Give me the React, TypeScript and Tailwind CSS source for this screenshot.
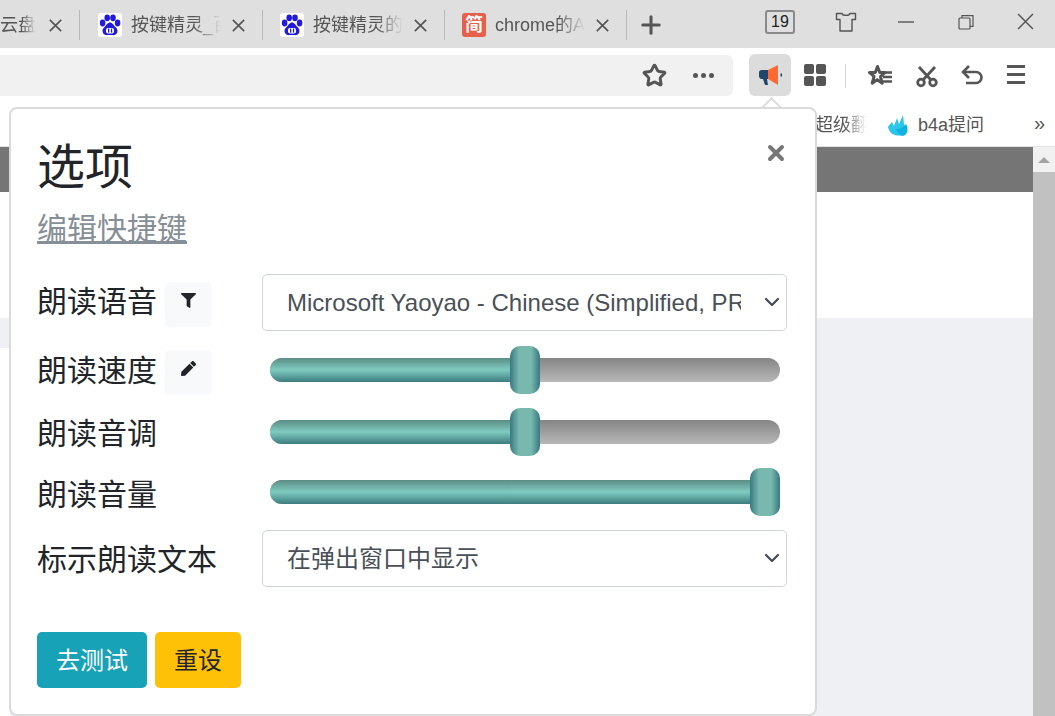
// App.tsx - browser window with the read-aloud options popup
import { ChevronDown, Plus, Star, X } from 'lucide-react';
import { FaFilter, FaPen } from 'react-icons/fa';

const tabs = [
  { title: '按键精灵_百度', icon: 'baidu' },
  { title: '按键精灵的', icon: 'baidu' },
  { title: 'chrome的API', icon: 'jian' },
];

function Cross({ size = 13, weight = 2 }: { size?: number; weight?: number }) {
  return (
    <svg viewBox="0 0 16 16" width={size} height={size} fill="none" stroke="#555" strokeWidth={weight} className="flex-shrink-0">
      <path d="M1 1l14 14M15 1L1 15" />
    </svg>
  );
}

function BaiduIcon() {
  return (
    <div className="w-6 h-6 flex-shrink-0 rounded-[3px] bg-white flex items-center justify-center">
      <svg viewBox="0 0 24 24" className="w-6 h-6" fill="#2319dc">
        <ellipse cx="4.600" cy="10" rx="2.800" ry="3.400" />
        <ellipse cx="9.200" cy="4.800" rx="2.800" ry="3.400" />
        <ellipse cx="15" cy="4.800" rx="2.800" ry="3.400" />
        <ellipse cx="19.600" cy="10" rx="2.800" ry="3.400" />
        <path d="M12 9.500c-2.500 0-3.400 2.600-5 4-2.200 1.800-3 3.800-2.200 6 .8 2.200 3.200 3 5 2.600 1.600-.3 2.800-.3 4.400 0 2 .4 4.200-.4 5-2.600.8-2.200 0-4.200-2.200-6-1.600-1.400-2.500-4-5-4z" />
        <rect x="8" y="15" width="8" height="5.400" rx="2" fill="#fff" />
        <rect x="10" y="15.600" width="1.300" height="4" fill="#2319dc" />
        <rect x="12.900" y="15.600" width="1.300" height="4" fill="#2319dc" />
      </svg>
    </div>
  );
}

function Tab({ title, icon }: { title: string; icon: string }) {
  return (
    <div className="w-[182px] h-[30px] flex items-center border-r border-[#b9b9b9] flex-shrink-0">
      <div className="w-[17px] flex-shrink-0" />
      {icon === 'baidu' ? (
        <BaiduIcon />
      ) : (
        <div className="w-6 h-6 flex-shrink-0 rounded-[3px] bg-[#e8604c] text-white text-[18px] leading-6 text-center font-bold">
          简
        </div>
      )}
      <div className="ml-[9px] w-[90px] overflow-hidden whitespace-nowrap text-[18px] text-[#555] [mask-image:linear-gradient(to_right,black_70%,transparent)]">
        {title}
      </div>
      <div className="ml-[11px]">
        <Cross />
      </div>
    </div>
  );
}

function Slider({ value }: { value: number }) {
  return (
    <div className="relative w-[510px] h-6 ml-2 rounded-xl bg-gradient-to-b from-[#858585] to-[#b8b8b8]">
      <div
        className="h-6 rounded-xl bg-gradient-to-b from-[#5c8d85] via-[#7fcbc0] to-[#3d7c7e]"
        style={{ width: `${value * 4.8 + 15}px` }}
      />
      <div
        className="absolute top-[-12px] w-[30px] h-12 rounded-[10px] bg-[linear-gradient(to_right,#377a80,#78b8ae_30%,#78b8ae_70%,#377a80)]"
        style={{ left: `${value * 4.8}px` }}
      />
    </div>
  );
}

function SelectBox({ value }: { value: string }) {
  return (
    <div className="relative w-[525px] h-[57px]">
      <select className="w-full h-full appearance-none bg-white border border-[#ced4da] rounded-[5px] pl-6 pr-[45px] text-[24px] text-[#495057]">
        <option>{value}</option>
      </select>
      <ChevronDown className="absolute right-[3px] top-[16px] w-6 h-6 text-[#444a55]" strokeWidth={2.2} />
    </div>
  );
}

function ToolIcon({ button }: { button: 'filter' | 'pen' }) {
  return (
    <div className="w-[47px] h-[45px] rounded-[5px] bg-[#f8f9fa] flex items-center justify-center pb-2 text-[#212529]">
      {button === 'filter' ? <FaFilter className="w-[15px] h-[15px]" /> : <FaPen className="w-[15px] h-[15px]" />}
    </div>
  );
}

export default function App() {
  return (
    <div className="relative w-[1055px] h-[716px] overflow-hidden bg-white font-['Liberation_Sans','Noto_Sans_CJK_SC',sans-serif]">
      {/* Tab bar */}
      <div className="h-12 bg-[#dfdfdf] flex items-center pt-[2px]">
        <div className="w-20 mr-px h-[30px] flex items-center border-r border-[#b9b9b9] flex-shrink-0">
          <div className="w-[36px] overflow-hidden whitespace-nowrap text-[18px] text-[#555] [mask-image:linear-gradient(to_right,black_60%,transparent)]">
            云盘
          </div>
          <div className="ml-[13px]">
            <Cross />
          </div>
        </div>
        {tabs.map((tab) => (
          <Tab key={tab.title + tab.icon} title={tab.title} icon={tab.icon} />
        ))}
        <Plus className="w-7 h-7 ml-[10px] text-[#555]" strokeWidth={2.6} />
        <div className="flex items-center mb-[7px]">
          <div className="ml-[100px] w-[30px] h-6 rounded-[3px] border-2 border-[#8a8a8a] text-[16px] leading-5 text-center text-[#222]">
            19
          </div>
          {/* shirt */}
          <svg viewBox="0 0 22 20" className="w-[22px] h-5 ml-[40px]" fill="none" stroke="#555" strokeWidth="1.4" strokeLinejoin="round">
            <path d="M7 1.500H1.500v6H5V19h12V7.500h3.500v-6H15c-.5 2.500-7.500 2.500-8 0z" />
          </svg>
          <svg viewBox="0 0 16 2" className="w-4 h-[2px] ml-[41px]" stroke="#555" strokeWidth="1.4">
            <path d="M0 1h16" />
          </svg>
          {/* restore */}
          <svg viewBox="0 0 16 16" className="w-4 h-4 ml-[44px]" fill="none" stroke="#555" strokeWidth="1.2">
            <rect x="1" y="4" width="11" height="11" rx="1" />
            <path d="M4 4V1.600h11v10.800h-3" />
          </svg>
          <div className="ml-[43px]">
            <Cross size={17} weight={1.4} />
          </div>
        </div>
      </div>

      {/* Toolbar */}
      <div className="h-[55px] flex items-center">
        <div className="w-[733px] h-[41px] rounded-r-[6px] bg-[#f1f1f1] flex items-center justify-end pr-[18px] gap-[26px]">
          <Star className="w-[25px] h-[25px] text-[#555]" strokeWidth={2.8} />
          <div className="flex gap-[3px] w-[22px]">
            <div className="w-[5px] h-[5px] rounded-full bg-[#555]" />
            <div className="w-[5px] h-[5px] rounded-full bg-[#555]" />
            <div className="w-[5px] h-[5px] rounded-full bg-[#555]" />
          </div>
        </div>
        <div className="ml-4 -mt-[2px] w-[42px] h-[42px] rounded-[6px] bg-[#dcdcdc] flex items-center justify-center">
          <svg viewBox="0 0 26 26" className="w-[26px] h-[26px]">
            <path d="M2 10.500c0-1.500 1-2.500 2.500-2.500H11v9H4.500C3 17 2 15.500 2 14z" fill="#234567" />
            <path d="M6 17h4l1 6H8z" fill="#234567" />
            <path d="M11 8l10-5v20l-10-6z" fill="#ff6a33" />
            <rect x="21" y="2" width="1.500" height="22" fill="#cfe8f7" />
            <rect x="23.500" y="11.500" width="1.500" height="3" fill="#234567" />
          </svg>
        </div>
        <div className="ml-[13px] -mt-[2px] grid grid-cols-2 gap-[2px] w-[22px]">
          <div className="w-[10px] h-[10px] rounded-[2px] bg-[#555]" />
          <div className="w-[10px] h-[10px] rounded-[2px] bg-[#555]" />
          <div className="w-[10px] h-[10px] rounded-[2px] bg-[#555]" />
          <div className="w-[10px] h-[10px] rounded-[2px] bg-[#555]" />
        </div>
        <div className="ml-[19px] w-px h-6 bg-[#d5d5d5]" />
        {/* favourites list */}
        <svg viewBox="0 0 26 26" className="w-[26px] h-[26px] ml-[21px]" fill="none" stroke="#555" strokeWidth="3">
          <path d="M10.500 3.500l2.300 6h5.200l-4.500 4.200 1.700 6.500-5-3.600-5 3.600 1.900-6.800L2.500 9.500h5.800z" strokeLinejoin="round" />
          <path d="M15 9.500h10M16 14h9M16 18.500h9" strokeWidth="2.400" />
        </svg>
        {/* scissors */}
        <svg viewBox="0 0 24 24" className="w-6 h-6 ml-[22px]" fill="none" stroke="#555" strokeWidth="2.800">
          <circle cx="6" cy="18.500" r="3.300" />
          <circle cx="18" cy="18.500" r="3.300" />
          <path d="M8 16L20 3M16 16L4 3" />
        </svg>
        {/* undo */}
        <svg viewBox="0 0 24 24" className="w-6 h-6 ml-[21px]" fill="none" stroke="#555" strokeWidth="2.600">
          <path d="M3 8h13a5.500 5.500 0 0 1 0 11H6" />
          <path d="M9 2L3 8l6 6" />
        </svg>
        <div className="ml-[23px] -mt-[2px] flex flex-col gap-[5px]">
          <div className="w-[18px] h-[3px] bg-[#555]" />
          <div className="w-[18px] h-[3px] bg-[#555]" />
          <div className="w-[18px] h-[3px] bg-[#555]" />
        </div>
      </div>

      {/* Bookmarks bar */}
      <div className="h-[44px] flex items-center border-b border-[#e2e2e2] pl-[815px] pt-[2px]">
        <div className="w-[52px] overflow-hidden whitespace-nowrap text-[18px] text-[#555] [mask-image:linear-gradient(to_right,black_55%,transparent)]">
          超级翻译
        </div>
        <svg viewBox="0 0 24 24" className="w-6 h-6 ml-5">
          <path d="M1 13c1-2 3-4 4-5l2 4 3-8 2 6 4-9 1 9c2 3 2 7 1 9-2 3-7 3-10 2-4-1-6-4-7-8z" fill="#2bc6ea" />
          <path d="M9 15c3 0 7-1 10-5 2 3 2 8 0 10-2 3-7 3-10-5z" fill="#0fb2e0" />
        </svg>
        <div className="ml-[7px] text-[18px] text-[#555] whitespace-nowrap">b4a提问</div>
        <div className="ml-[50px] mb-[5px] text-[20px] leading-5 text-[#555]">»</div>
      </div>

      {/* Page behind the popup */}
      <div className="flex h-[570px]">
        <div className="w-[1033px] flex flex-col">
          <div className="h-[45px] bg-[#757575]" />
          <div className="h-[126px] bg-white" />
          <div className="flex-1 bg-[#eff0f4]" />
        </div>
        <div className="w-[22px] flex flex-col bg-[#f1f1f1]">
          <div className="h-[25px] flex items-center justify-center">
            <div className="w-0 h-0 border-x-[6px] border-x-transparent border-b-[6px] border-b-[#a3a3a3]" />
          </div>
          <div className="flex-1 bg-[#c1c1c1]" />
        </div>
      </div>
      <div className="absolute left-0 top-[348px] w-[10px] h-[368px] bg-white" />

      {/* Popup arrow */}
      <div className="absolute left-[764px] top-[100px] w-[15px] h-[15px] rotate-45 bg-white border-l-2 border-t-2 border-[#dddddd]" />

      {/* Options popup */}
      <div className="absolute left-[9px] top-[107px] w-[808px] h-[609px] rounded-[8px] border-2 border-[#dadada] bg-white pl-[26px]">
        <X className="absolute right-[27px] top-[32px] w-[24px] h-[24px] text-[#777]" strokeWidth={4} />
        <h1 className="text-[48px] leading-[58px] text-[#212529] pt-[30px] h-[81px]">选项</h1>
        <div className="mt-[19px] h-[40px] text-[30px] leading-[40px] text-[#868e96] underline">编辑快捷键</div>

        <div className="mt-[25px] flex items-center h-[57px]">
          <div className="w-[128px] pb-[2px] text-[30px] text-[#212529]">朗读语音</div>
          <div className="mt-[4px]">
            <ToolIcon button="filter" />
          </div>
          <div className="ml-[50px]">
            <SelectBox value="Microsoft Yaoyao - Chinese (Simplified, PRC)" />
          </div>
        </div>
        <div className="mt-[15px] flex items-center h-12">
          <div className="w-[128px] text-[30px] text-[#212529]">朗读速度</div>
          <div className="mt-[4px]">
            <ToolIcon button="pen" />
          </div>
          <div className="ml-[50px]">
            <Slider value={50} />
          </div>
        </div>
        <div className="mt-[14px] flex items-center h-12">
          <div className="w-[225px] pt-[2px] text-[30px] text-[#212529]">朗读音调</div>
          <Slider value={50} />
        </div>
        <div className="mt-3 flex items-center h-12">
          <div className="w-[225px] pt-[4px] text-[30px] text-[#212529]">朗读音量</div>
          <Slider value={100} />
        </div>
        <div className="mt-[14px] flex items-center h-[57px]">
          <div className="w-[225px] pt-[2px] text-[30px] text-[#212529]">标示朗读文本</div>
          <SelectBox value="在弹出窗口中显示" />
        </div>

        <div className="mt-[45px] flex gap-2">
          <button className="w-[110px] h-14 pt-[2px] rounded-[5px] bg-[#17a2b8] text-white text-[24px]">去测试</button>
          <button className="w-[86px] h-14 pt-[2px] rounded-[5px] bg-[#ffc107] text-[#212529] text-[24px]">重设</button>
        </div>
      </div>
    </div>
  );
}
